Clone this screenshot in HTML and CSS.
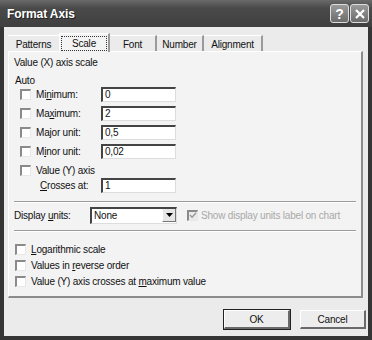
FILE: index.html
```html
<!DOCTYPE html>
<html lang="en">
<head>
    <meta charset="UTF-8">
    <title>Format Axis</title>
    <link rel="stylesheet" href="styles.css">
</head>
<body>
    <div class="window">
        <div class="titlebar">
            <span class="title">Format Axis</span>
            <div class="title-buttons">
                <span class="tbtn">?</span>
                <span class="tbtn close">
                    <svg width="12" height="12" viewBox="0 0 12 12"><path d="M2 2 L10 10 M10 2 L2 10" stroke="#fff" stroke-width="2.2"/></svg>
                </span>
            </div>
        </div>
        <div class="client">
            <div class="tabs">
                <span class="tab patterns">Patterns</span>
                <span class="tab active"><span class="focus">Scale</span></span>
                <span class="tab font">Font</span>
                <span class="tab number">Number</span>
                <span class="tab align">Alignment</span>
            </div>
            <div class="panel">
                <div class="heading">Value (X) axis scale</div>
                <div class="auto">Auto</div>
                <div class="row">
                    <span class="check"></span>
                    <span class="label">Mi<u>n</u>imum:</span>
                    <span class="field">0</span>
                </div>
                <div class="row">
                    <span class="check"></span>
                    <span class="label">Ma<u>x</u>imum:</span>
                    <span class="field">2</span>
                </div>
                <div class="row">
                    <span class="check"></span>
                    <span class="label">Ma<u>j</u>or unit:</span>
                    <span class="field">0,5</span>
                </div>
                <div class="row">
                    <span class="check"></span>
                    <span class="label">M<u>i</u>nor unit:</span>
                    <span class="field">0,02</span>
                </div>
                <div class="row short">
                    <span class="check"></span>
                    <span>Value (Y) axis</span>
                </div>
                <div class="row crosses">
                    <span class="label indent"><u>C</u>rosses at:</span>
                    <span class="field">1</span>
                </div>
                <div class="sep"></div>
                <div class="units">
                    <span class="units-label">Display <u>u</u>nits:</span>
                    <span class="select">None<span class="arrow"><svg width="7" height="4" viewBox="0 0 7 4"><path d="M0 0 H7 L3.5 4 Z" fill="#000"/></svg></span></span>
                    <span class="check disabled"><svg width="9" height="9" viewBox="0 0 9 9"><path d="M1 4 L3.5 6.5 L8 1.5" stroke="#9a9a9a" stroke-width="1.6" fill="none"/></svg></span>
                    <span class="grey">Show display units label on chart</span>
                </div>
                <div class="sep second"></div>
                <div class="opts">
                    <div class="opt"><span class="check"></span><span><u>L</u>ogarithmic scale</span></div>
                    <div class="opt"><span class="check"></span><span>Values in <u>r</u>everse order</span></div>
                    <div class="opt"><span class="check"></span><span>Value (Y) axis crosses at <u>m</u>aximum value</span></div>
                </div>
            </div>
            <div class="buttons">
                <span class="btn default">OK</span>
                <span class="btn">Cancel</span>
            </div>
        </div>
    </div>
</body>
</html>
```

FILE: styles.css
```css
body {
    margin: 0;
    font-family: 'Liberation Sans', Arial, sans-serif;
    font-size: 10px;
    letter-spacing: -0.2px;
    color: #111;
    background: #2c2c2c;
    white-space: nowrap;
}
.window {
    width: 372px;
    height: 340px;
    display: flex;
    flex-direction: column;
    background: #353535;
    box-sizing: border-box;
    padding: 0 4px 4px 4px;
}
.titlebar {
    height: 27px;
    display: flex;
    align-items: center;
    justify-content: space-between;
    background: linear-gradient(to bottom, #6a6a6a, #4a4a4a 30%, #3f3f3f);
    margin: 0 -4px;
    padding-right: 3px;
    padding-left: 7px;
}
.title {
    color: #fff;
    font-weight: bold;
    font-size: 12px;
    letter-spacing: -0.1px;
    text-shadow: 1px 1px 0 #222;
}
.title-buttons { display: flex; gap: 1px; }
.tbtn {
    width: 19px;
    height: 19px;
    box-sizing: border-box;
    border: 1px solid #ddd;
    border-radius: 3px;
    background: linear-gradient(to bottom, #9a9a9a, #6c6c6c);
    color: #fff;
    font-weight: bold;
    font-size: 14px;
    display: flex;
    align-items: center;
    justify-content: center;
}
.client {
    flex: 1;
    background: #ebebeb;
    padding: 6px 5px 0 4px;
    display: flex;
    flex-direction: column;
}
.tabs {
    display: flex;
    height: 18px;
    align-items: flex-end;
}
.tab {
    height: 16px;
    box-sizing: border-box;
    display: flex;
    align-items: center;
    justify-content: center;
    border-right: 2px solid #9a9a9a;
    border-top: 1px solid #fff;
    padding-top: 1px;
}
.tab.patterns { width: 51px; border-right: none; }
.tab.font { width: 47px; }
.tab.number { width: 47px; }
.tab.align { width: 59px; }
.tab.active {
    width: 51px;
    height: 19px;
    background: #f3f3f3;
    border-left: 1px solid #fff;
    margin-bottom: -1px;
    position: relative;
}
.tab.active .focus {
    border: 1px dotted #333;
    padding: 1px 10px;
}
.panel {
    height: 247px;
    box-sizing: border-box;
    background: #f3f3f3;
    border: 1px solid #fff;
    border-right: 2px solid #8c8c8c;
    border-bottom: 2px solid #8c8c8c;
    padding: 3px 5px 0 5px;
    display: flex;
    flex-direction: column;
}
.heading { height: 16px; line-height: 16px; }
.auto { height: 8px; line-height: 8px; margin-top: 6px; padding-left: 1px; }
.row {
    display: flex;
    align-items: center;
    height: 19px;
    padding-left: 6px;
}
.row.short { height: 15px; margin-top: 2px; }
.row.crosses { height: 15px; }
.check {
    width: 11px;
    height: 11px;
    flex: none;
    box-sizing: border-box;
    background: #fff;
    border-top: 2px solid #8a8a8a;
    border-left: 2px solid #8a8a8a;
    border-right: 1px solid #e8e8e8;
    border-bottom: 1px solid #e8e8e8;
    margin-right: 5px;
    display: flex;
    align-items: center;
    justify-content: center;
}
.label { width: 65px; }
.label.indent { margin-left: 20px; width: 61px; }
.field {
    width: 75px;
    height: 15px;
    box-sizing: border-box;
    background: #fff;
    border-top: 2px solid #444;
    border-left: 2px solid #444;
    border-right: 1px solid #ddd;
    border-bottom: 1px solid #ddd;
    padding-left: 2px;
    line-height: 12px;
}
.sep {
    height: 0;
    border-top: 1px solid #9c9c9c;
    border-bottom: 1px solid #fff;
    margin: 8px 0 4px 0;
}
.sep.second { margin: 7px 0 6px 0; }
.units {
    display: flex;
    align-items: center;
    height: 16px;
}
.units-label { width: 76px; }
.select {
    width: 87px;
    height: 17px;
    box-sizing: border-box;
    background: #fff;
    border-top: 2px solid #444;
    border-left: 2px solid #444;
    border-right: 1px solid #ddd;
    border-bottom: 1px solid #ddd;
    padding-left: 2px;
    display: flex;
    align-items: center;
    justify-content: space-between;
    margin-right: 10px;
}
.arrow {
    width: 14px;
    height: 13px;
    background: #e6e6e6;
    border-left: 1px solid #fff;
    border-right: 1px solid #777;
    border-bottom: 1px solid #777;
    box-sizing: border-box;
    display: flex;
    align-items: center;
    justify-content: center;
}
.check.disabled {
    background: #ebebeb;
    margin-right: 3px;
}
.grey { color: #a8a8a8; }
.opts { padding-top: 3px; }
.opt {
    display: flex;
    align-items: center;
    height: 16px;
    padding-left: 1px;
}
.buttons {
    display: flex;
    justify-content: flex-end;
    gap: 10px;
    margin-top: 12px;
    margin-right: -3px;
}
.btn {
    width: 66px;
    height: 19px;
    box-sizing: border-box;
    background: #ededed;
    border: 1px solid #fff;
    border-right: 2px solid #6a6a6a;
    border-bottom: 2px solid #6a6a6a;
    display: flex;
    align-items: center;
    justify-content: center;
}
.btn.default { outline: 1px solid #222; }
```
